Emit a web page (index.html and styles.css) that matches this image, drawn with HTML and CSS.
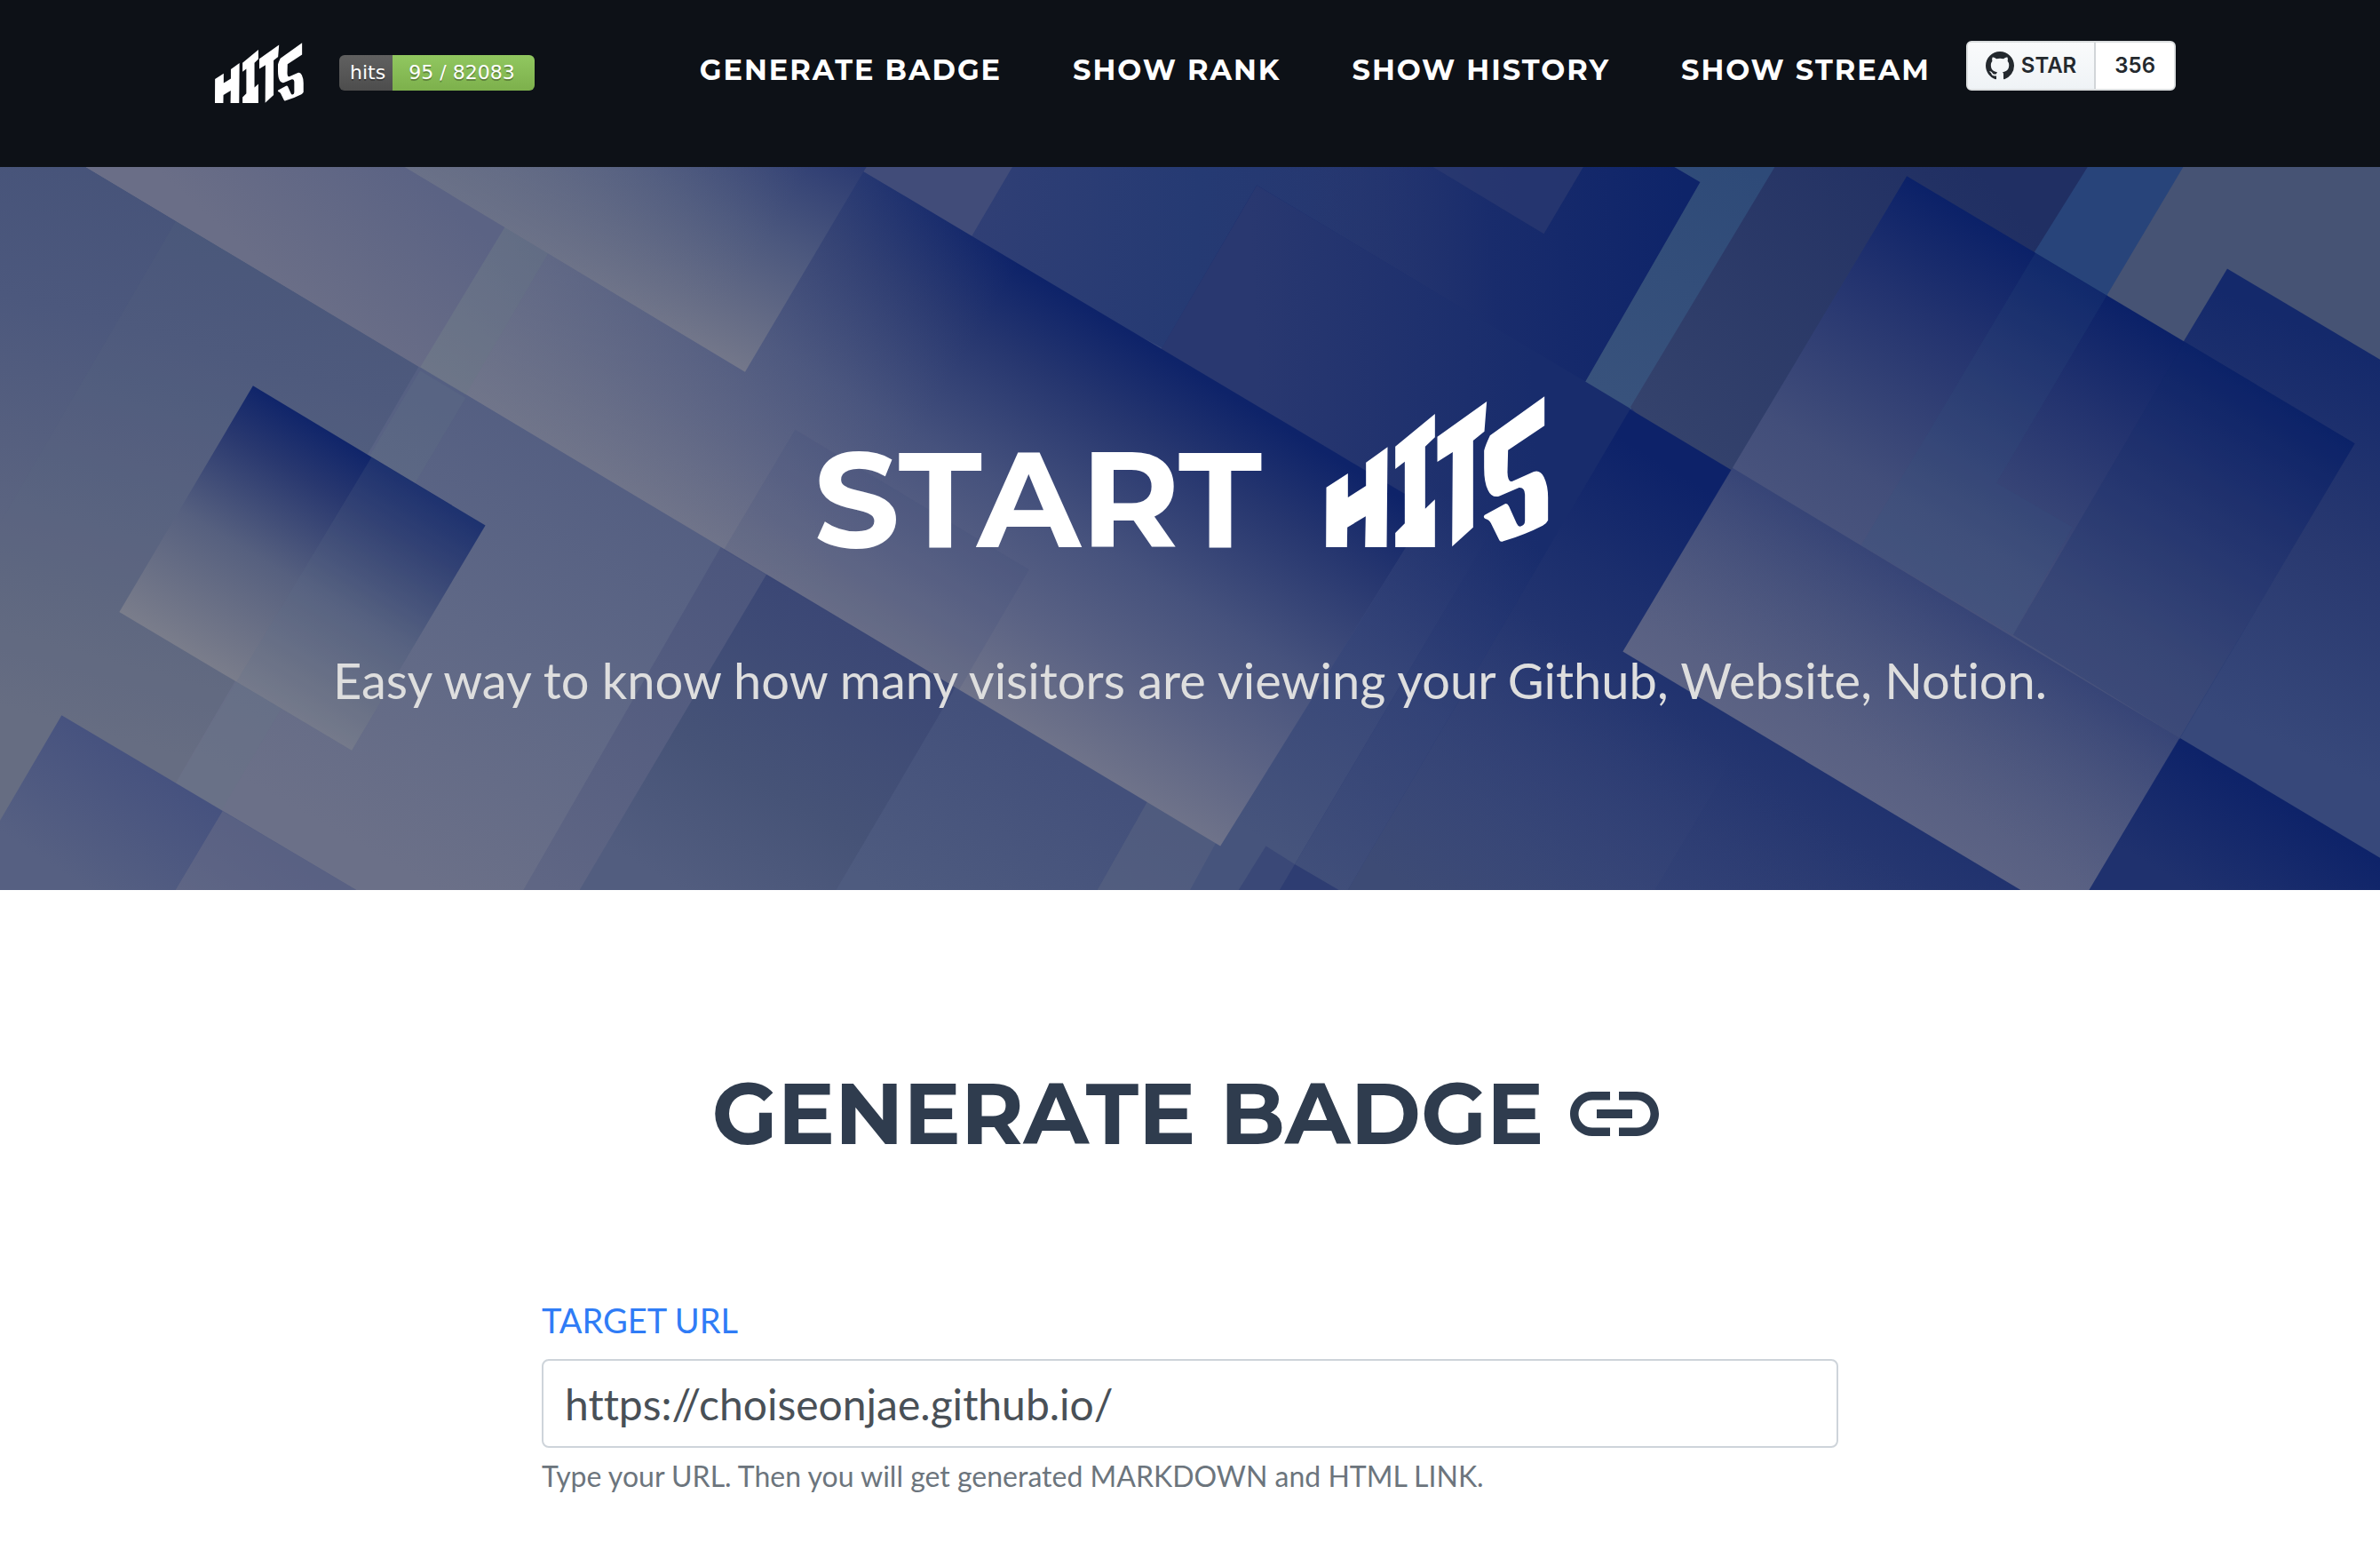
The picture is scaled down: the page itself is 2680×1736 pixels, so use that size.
FILE: index.html
```html
<!DOCTYPE html>
<html lang="en">
<head>
<meta charset="utf-8">
<title>HITS</title>
<meta name="viewport" content="width=device-width, initial-scale=1">
<link rel="stylesheet" href="styles.css">
</head>
<body>
<svg class="defs" aria-hidden="true">
  <symbol id="hits-logo" viewBox="96 78 752 510">
    <path d="M97 386 170 339V420L231 381V302L304 250 301 588H228L230 484 168 521 167 588H96ZM330 248 464 138V217L431 248V458L464 427V588H330V540L362 508V299L330 324ZM472 215 639 96 631 197 593 228V521L522 586 524 267 472 300ZM834 79V178L711 260 709 335Q710 371 726 365L798 333Q820 326 832 351Q846 380 846 420V497Q842 507 828 515Q770 545 695 568Q684 573 680 562L653 507Q647 495 634 492Q625 486 632 479L698 443Q708 437 714 450L740 508Q745 519 752 518Q768 515 768 498V410Q767 385 748 387L680 416Q655 422 643 395Q630 370 630 320V262Q634 245 650 211Z"/>
  </symbol>
</svg>

<header class="header">
  <div class="container header-row">
    <a class="brand" href="#home" aria-label="HITS"><svg class="brand-logo"><use href="#hits-logo"/></svg></a>
    <a class="badge" href="#badge"><span class="badge-label">hits</span><span class="badge-count">95 / 82083</span></a>
    <nav class="nav">
      <a href="#generate">Generate Badge</a>
      <a href="#rank">Show Rank</a>
      <a href="#history">Show History</a>
      <a href="#stream">Show Stream</a>
    </nav>
    <div class="star">
      <a class="star-button" href="#star"><svg class="star-icon" viewBox="0 0 16 16" aria-hidden="true"><path fill-rule="evenodd" d="M8 0C3.58 0 0 3.58 0 8c0 3.54 2.29 6.53 5.47 7.59.4.07.55-.17.55-.38 0-.19-.01-.82-.01-1.49-2.01.37-2.53-.49-2.69-.94-.09-.23-.48-.94-.82-1.13-.28-.15-.68-.52-.01-.53.63-.01 1.08.58 1.23.82.72 1.21 1.87.87 2.33.66.07-.52.28-.87.51-1.07-1.78-.2-3.64-.89-3.64-3.95 0-.87.31-1.59.82-2.15-.08-.2-.36-1.02.08-2.12 0 0 .67-.21 2.2.82.64-.18 1.32-.27 2-.27s1.36.09 2 .27c1.53-1.04 2.2-.82 2.2-.82.44 1.1.16 1.92.08 2.12.51.56.82 1.27.82 2.15 0 3.07-1.87 3.75-3.65 3.95.29.25.54.73.54 1.48 0 1.07-.01 1.93-.01 2.2 0 .21.15.46.55.38A8.01 8.01 0 0 0 16 8c0-4.42-3.58-8-8-8z"/></svg>STAR</a>
      <a class="star-count" href="#stargazers">356</a>
    </div>
  </div>
</header>

<section class="hero" id="home">
  <svg class="hero-art" viewBox="0 110 1568 476" preserveAspectRatio="xMidYMid slice" aria-hidden="true">
    <defs>
      <linearGradient id="left" gradientUnits="userSpaceOnUse" x1="120" y1="110" x2="20" y2="470"><stop offset="0" stop-color="#465379"/><stop offset=".3" stop-color="#4c587d"/><stop offset="1" stop-color="#686e83"/></linearGradient>
      <linearGradient id="mid" gradientUnits="userSpaceOnUse" x1="420" y1="290" x2="260" y2="570"><stop offset="0" stop-color="#525d81"/><stop offset=".5" stop-color="#5f6886"/><stop offset="1" stop-color="#6b7088"/></linearGradient>
      <linearGradient id="strip" gradientUnits="userSpaceOnUse" x1="490" y1="370" x2="365" y2="586"><stop offset="0" stop-color="#4c567d"/><stop offset="1" stop-color="#5f6684"/></linearGradient>
      <linearGradient id="dusk" gradientUnits="userSpaceOnUse" x1="560" y1="400" x2="450" y2="586"><stop offset="0" stop-color="#3a4675"/><stop offset=".6" stop-color="#465377"/><stop offset="1" stop-color="#525d7f"/></linearGradient>
      <linearGradient id="low" gradientUnits="userSpaceOnUse" x1="650" y1="470" x2="580" y2="586"><stop offset="0" stop-color="#43507b"/><stop offset="1" stop-color="#4e5b7f"/></linearGradient>
      <linearGradient id="band" gradientUnits="userSpaceOnUse" x1="760" y1="229" x2="624" y2="452"><stop offset="0" stop-color="#0e2369"/><stop offset=".2" stop-color="#26366f"/><stop offset=".5" stop-color="#46527d"/><stop offset=".75" stop-color="#5a6284"/><stop offset="1" stop-color="#70748a"/></linearGradient>
      <linearGradient id="bandglow" gradientUnits="userSpaceOnUse" x1="300" y1="200" x2="560" y2="358"><stop offset="0" stop-color="#70768a" stop-opacity=".6"/><stop offset="1" stop-color="#70768a" stop-opacity="0"/></linearGradient>
      <linearGradient id="upper" gradientUnits="userSpaceOnUse" x1="270" y1="110" x2="195" y2="194"><stop offset="0" stop-color="#5b6384"/><stop offset="1" stop-color="#6a6e87"/></linearGradient>
      <linearGradient id="crest" gradientUnits="userSpaceOnUse" x1="560" y1="88" x2="481" y2="239"><stop offset="0" stop-color="#24346f"/><stop offset=".5" stop-color="#4c587e"/><stop offset="1" stop-color="#73778a"/></linearGradient>
      <linearGradient id="crestglow" gradientUnits="userSpaceOnUse" x1="330" y1="110" x2="480" y2="200"><stop offset="0" stop-color="#687087" stop-opacity=".6"/><stop offset="1" stop-color="#687087" stop-opacity="0"/></linearGradient>
      <linearGradient id="square" gradientUnits="userSpaceOnUse" x1="243" y1="300" x2="154" y2="448"><stop offset="0" stop-color="#10256a"/><stop offset=".2" stop-color="#29386f"/><stop offset=".55" stop-color="#56607f"/><stop offset="1" stop-color="#7a7d8b"/></linearGradient>
      <linearGradient id="corner" gradientUnits="userSpaceOnUse" x1="130" y1="525" x2="80" y2="600"><stop offset="0" stop-color="#46527f"/><stop offset="1" stop-color="#566082"/></linearGradient>
      <linearGradient id="sky" gradientUnits="userSpaceOnUse" x1="640" y1="110" x2="940" y2="130"><stop offset="0" stop-color="#303f75"/><stop offset=".5" stop-color="#253a73"/><stop offset="1" stop-color="#26366f"/></linearGradient>
      <linearGradient id="navy" gradientUnits="userSpaceOnUse" x1="1110" y1="130" x2="850" y2="150"><stop offset="0" stop-color="#0e2469"/><stop offset=".5" stop-color="#192c6c"/><stop offset="1" stop-color="#28386f" stop-opacity="0"/></linearGradient>
      <linearGradient id="deep" gradientUnits="userSpaceOnUse" x1="1120" y1="320" x2="955" y2="595"><stop offset="0" stop-color="#0d2269"/><stop offset=".25" stop-color="#1b2e6d"/><stop offset=".6" stop-color="#2b3b72"/><stop offset="1" stop-color="#38477a"/></linearGradient>
      <linearGradient id="deeptop" gradientUnits="userSpaceOnUse" x1="1010" y1="260" x2="830" y2="270"><stop offset="0" stop-color="#182c6c"/><stop offset="1" stop-color="#293870"/></linearGradient>
      <linearGradient id="slate" gradientUnits="userSpaceOnUse" x1="960" y1="330" x2="830" y2="551"><stop offset="0" stop-color="#35447a" stop-opacity="0"/><stop offset=".5" stop-color="#3a497a" stop-opacity=".9"/><stop offset="1" stop-color="#46547c"/></linearGradient>
      <linearGradient id="haze" gradientUnits="userSpaceOnUse" x1="1060" y1="440" x2="950" y2="600"><stop offset="0" stop-color="#35447a" stop-opacity="0"/><stop offset="1" stop-color="#3d4b75"/></linearGradient>
      <linearGradient id="teal" gradientUnits="userSpaceOnUse" x1="1150" y1="110" x2="1060" y2="260"><stop offset="0" stop-color="#2e4a78"/><stop offset="1" stop-color="#38527c"/></linearGradient>
      <linearGradient id="ink" gradientUnits="userSpaceOnUse" x1="1300" y1="110" x2="1110" y2="300"><stop offset="0" stop-color="#202f63"/><stop offset="1" stop-color="#34426c"/></linearGradient>
      <linearGradient id="card" gradientUnits="userSpaceOnUse" x1="1403" y1="204" x2="1216" y2="517"><stop offset="0" stop-color="#0b2168"/><stop offset=".2" stop-color="#23336f"/><stop offset=".5" stop-color="#424e7a"/><stop offset="1" stop-color="#5c6384"/></linearGradient>
      <linearGradient id="cardshade" gradientUnits="userSpaceOnUse" x1="1200" y1="344" x2="1140" y2="444"><stop offset="0" stop-color="#1d2f6e" stop-opacity=".4"/><stop offset="1" stop-color="#44517c" stop-opacity="0"/></linearGradient>
      <linearGradient id="right" gradientUnits="userSpaceOnUse" x1="1530" y1="220" x2="1430" y2="460"><stop offset="0" stop-color="#14296b"/><stop offset=".5" stop-color="#293970"/><stop offset="1" stop-color="#37487a"/></linearGradient>
      <linearGradient id="end" gradientUnits="userSpaceOnUse" x1="1500" y1="527" x2="1460" y2="595"><stop offset="0" stop-color="#0e2369"/><stop offset="1" stop-color="#1f316e"/></linearGradient>
    </defs>
    <path fill="url(#left)" d="M0 110H500V586H0Z"/>
    <path fill="#5c6a80" fill-opacity=".14" d="M137 110H357L75 586H0V345Z"/>
    <path fill="url(#mid)" d="M277 240 480 361 345 586H75Z"/>
    <path fill="#667785" fill-opacity=".2" d="M277 244 307 262 115 586H75Z"/>
    <path fill="url(#square)" d="M167 254 320 346 232 494 79 403Z"/>
    <path fill="#60708a" fill-opacity=".18" d="M245 301 320 346 232 494 156 449Z"/>
    <path fill="url(#corner)" d="M41 471 235 586H0V541Z"/>
    <path fill="#70748a" fill-opacity=".45" d="M147 534 235 586H116Z"/>
    <path fill="url(#strip)" d="M478 355 515 376 382 586H345Z"/>
    <path fill="url(#dusk)" d="M507 375 804 553 787 586H382Z"/>
    <path fill="url(#low)" d="M634 445 804 550 787 586H551Z"/>
    <path fill="#5b6681" fill-opacity=".5" d="M758 524 804 552 787 586H723Z"/>
    <path fill="url(#sky)" d="M540 110H1180V300H900Z"/>
    <path fill="#46507b" fill-opacity=".8" d="M564 110H667L640 156Z"/>
    <path fill="url(#navy)" d="M808 110H1103L1120 120 1044 252 828 122Z"/>
    <path fill="#2c3b71" fill-opacity=".7" d="M944 110H1043L1017 154Z"/>
    <path fill="url(#teal)" d="M1103 110H1171L1074 270 1044 252 1120 120Z"/>
    <path fill="url(#ink)" d="M1169 110H1376L1200 400 1074 268Z"/>
    <path fill="#28447a" d="M1375 110H1440L1388 230 1300 230Z"/>
    <path fill="#465374" d="M1438 110H1568V300H1420L1388 194Z"/>
    <path fill="url(#right)" d="M1467 177 1568 237V586H1300V455Z"/>
    <path fill="url(#deep)" d="M828 122 1568 566V586H787L942 335 765 230Z"/>
    <path fill="url(#deeptop)" d="M828 122 1074 269 888 586H787L942 335 765 230Z"/>
    <path fill="url(#slate)" d="M930 320H1000L843 586H784Z"/>
    <path fill="url(#slate)" fill-opacity=".8" d="M1000 320H1044L888 586H843Z"/>
    <path fill="url(#haze)" d="M1044 320 1069 429 1153 480 1090 586H888Z"/>
    <path fill="url(#haze)" fill-opacity=".5" d="M1153 480 1331 586H1090Z"/>
    <path fill="#3a4877" d="M834 557 853 569 843 586H816Z"/>
    <path fill="#2e3d72" d="M853 569 882 586H843Z"/>
    <path fill="url(#band)" d="M564 110 569 113 942 335 804 557 57 110Z"/>
    <path fill="url(#bandglow)" d="M57 110H564L680 179 560 411Z"/>
    <path fill="#667785" fill-opacity=".3" d="M341 136 370 152 307 260 277 242Z"/>
    <path fill="#3a4a77" fill-opacity=".14" d="M524 283 678 375 632 454 477 362Z"/>
    <path fill="url(#upper)" d="M57 110H300L341 136 277 242Z"/>
    <path fill="url(#crest)" d="M267 110H571L569 113 491 245Z"/>
    <path fill="url(#crestglow)" d="M267 110H571L569 113 491 245Z"/>
    <path fill="url(#end)" d="M1436 486 1568 565V586H1376Z"/>
    <path fill="url(#card)" d="M1256 116 1551 292 1376 586H1331L1069 429Z"/>
    <path fill="#2f5583" fill-opacity=".16" d="M1341 166 1388 194 1315 318 1365 347 1326 418 1226 359Z"/>
    <path fill="#10266b" fill-opacity=".2" d="M1439 225 1551 292 1436 486 1326 418Z"/>
    <path fill="url(#cardshade)" d="M1141 308 1436 486 1376 586H1331L1069 429Z"/>
  </svg>
  <div class="hero-body">
    <h1 class="hero-title">START <svg class="hero-logo" role="img" aria-label="HITS"><use href="#hits-logo"/></svg></h1>
    <p class="hero-text">Easy way to know how many visitors are viewing your Github, Website, Notion.</p>
  </div>
</section>

<main class="container generate" id="generate">
  <h2 class="section-title">GENERATE BADGE <svg class="link-icon" viewBox="0 0 24 24" aria-hidden="true"><path d="M3.900 12c0-1.710 1.390-3.100 3.100-3.100h4V7H7c-2.760 0-5 2.240-5 5s2.240 5 5 5h4v-1.900H7c-1.710 0-3.100-1.390-3.100-3.100zM8 13h8v-2H8v2zm9-6h-4v1.900h4c1.710 0 3.100 1.390 3.100 3.100s-1.390 3.100-3.100 3.100h-4V17h4c2.760 0 5-2.240 5-5s-2.240-5-5-5z"/></svg></h2>
  <form class="form">
    <label class="field-label" for="url">TARGET URL</label>
    <input class="field-input" id="url" type="text" value="https://choiseonjae.github.io/" aria-describedby="url-help">
    <small class="field-help" id="url-help">Type your URL. Then you will get generated MARKDOWN and HTML LINK.</small>
  </form>
</main>
</body>
</html>
```
FILE: styles.css
```css
*, *::before, *::after { box-sizing: border-box; }

body {
  margin: 0;
  background: #fff;
  color: #212529;
  font-family: Lato, "Noto Sans", sans-serif;
  font-size: 32px;
  line-height: 48px;
  font-variant-ligatures: none;
}

a { color: inherit; text-decoration: none; }

.defs { position: absolute; width: 0; height: 0; }

.container {
  width: 100%;
  max-width: 2280px;
  margin: 0 auto;
  padding: 0 30px;
}

/* Header */
.header { background: #0d1117; padding: 46px 0 70px; }

.header-row { display: flex; align-items: center; }

.brand { padding-left: 12px; margin-right: 40px; }
.brand-logo { display: block; width: 100px; height: 68px; fill: #fff; }

.badge {
  display: flex;
  height: 40px;
  border-radius: 6px;
  overflow: hidden;
  color: #fff;
  font: 22px/40px "DejaVu Sans", sans-serif;
  text-shadow: 0 2px 0 rgba(1, 1, 1, .3);
}
.badge-label { width: 60px; padding-left: 12px; background: linear-gradient(#606060, #4d4d4d); }
.badge-count { width: 160px; padding-right: 4px; text-align: center; background: linear-gradient(#91c760, #7db04c); }

.nav { display: flex; margin-left: auto; padding-bottom: 6px; }
.nav a {
  padding: 0 40px;
  color: #fff;
  font-family: Montserrat, Inter, sans-serif;
  font-weight: 700;
  letter-spacing: 2px;
  text-transform: uppercase;
  white-space: nowrap;
}

.star {
  display: flex;
  height: 56px;
  margin-bottom: 16px;
  border: 2px solid #dcdfe0;
  border-radius: 6px;
  overflow: hidden;
  background: #fff;
  color: #24292e;
  font: 600 24px/52px Inter, sans-serif;
}
.star-button {
  display: flex;
  align-items: center;
  gap: 8px;
  padding: 0 20px;
  border-right: 2px solid #d1d5d8;
  background: linear-gradient(#fafbfc, #eff3f6);
}
.star-icon { width: 32px; height: 32px; fill: #24292e; }
.star-count { padding: 0 21px; }

/* Hero */
.hero { position: relative; overflow: hidden; background: #36467a; }
.hero-art { position: absolute; inset: 0; width: 100%; height: 100%; }
.hero-body { position: relative; padding: 258px 30px 200px; text-align: center; }
.hero-title {
  display: flex;
  justify-content: center;
  align-items: baseline;
  gap: 72px;
  margin: 0;
  padding-right: 20px;
  color: #fff;
  font: 700 152px/192px Montserrat, Inter, sans-serif;
}
.hero-logo { width: 251px; height: 170px; fill: #fff; }
.hero-text { margin: 72px 0 0; color: #dedede; font-size: 56px; line-height: 72px; }

/* Generate badge */
.generate { padding-top: 192px; padding-bottom: 48px; }
.section-title {
  display: flex;
  justify-content: center;
  align-items: center;
  gap: 20px;
  margin: 0;
  color: #2f3c4e;
  font: 700 96px/120px Montserrat, Inter, sans-serif;
}
.link-icon { width: 120px; height: 120px; fill: #2f3c4e; }

.form { max-width: 1460px; margin: 144px auto 0; }
.field-label { display: block; margin-bottom: 16px; color: #2f7cf6; font-size: 38px; line-height: 56px; }
.field-input {
  display: block;
  width: 100%;
  height: 100px;
  padding: 0 24px;
  border: 2px solid #ced4da;
  border-radius: 8px;
  background: #fff;
  color: #495057;
  font-family: inherit;
  font-size: 48px;
  font-variant-ligatures: none;
}
.field-help { display: block; margin-top: 8px; color: #6c757d; font-size: 32px; line-height: 48px; }
```
